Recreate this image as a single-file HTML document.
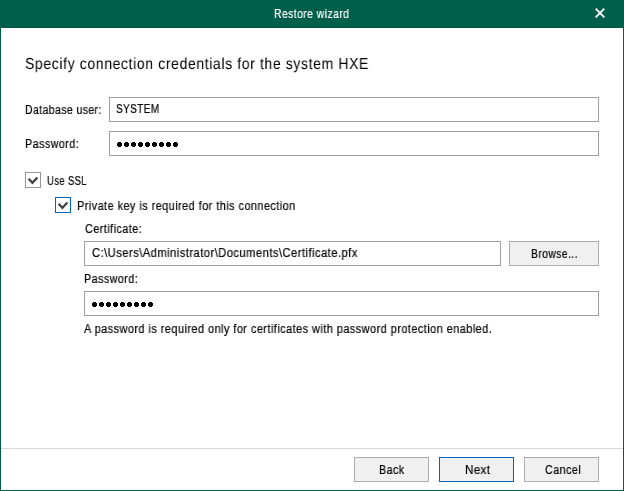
<!DOCTYPE html>
<html><head><meta charset="utf-8">
<style>
html,body{margin:0;padding:0;}
body{width:624px;height:491px;position:relative;overflow:hidden;background:#fff;font-family:"Liberation Sans",sans-serif;font-size:12px;color:#000;}
.a{position:absolute;}
.t{position:absolute;white-space:nowrap;line-height:1;transform-origin:0 0;will-change:transform;-webkit-text-stroke:0.2px currentColor;}
.box{position:absolute;box-sizing:border-box;border:1px solid #a0a0a0;background:#fff;}
.btn{position:absolute;box-sizing:border-box;border:1px solid #adadad;background:#f0f0f0;}
.cb{position:absolute;box-sizing:border-box;width:16px;height:16px;border:1px solid #999;background:#fff;}
</style></head><body>
<div class="a" style="left:0;top:0;width:624px;height:27px;background:#005f4b;"></div>
<div class="a" style="left:0;top:27px;width:624px;height:1px;background:#005545;"></div>
<div class="a" style="left:0;top:0;width:1px;height:491px;background:#005f4b;"></div>
<div class="a" style="left:623px;top:0;width:1px;height:491px;background:#005f4b;"></div>
<div class="a" style="left:0;top:490px;width:624px;height:1px;background:#005f4b;"></div>
<div class="box" style="left:109px;top:97px;width:490px;height:25px;"></div>
<div class="box" style="left:109px;top:131px;width:490px;height:25px;"></div>
<div class="cb" style="left:25px;top:172px;"></div>
<div class="cb" style="left:55px;top:197px;border-color:#0065b8;"></div>
<svg class="a" style="left:25px;top:172px" width="16" height="16" viewBox="0 0 16 16"><path d="M3.6 6.8L7.4 10.8L12.4 5.6" stroke="#404040" stroke-width="2.2" fill="none"/></svg>
<svg class="a" style="left:55px;top:197px" width="16" height="16" viewBox="0 0 16 16"><path d="M3.6 6.8L7.4 10.8L12.4 5.6" stroke="#404040" stroke-width="2.2" fill="none"/></svg>
<div class="box" style="left:84px;top:241px;width:417px;height:25px;"></div>
<div class="btn" style="left:509px;top:241px;width:90px;height:25px;"></div>
<div class="box" style="left:84px;top:291px;width:515px;height:25px;"></div>
<div class="a" style="left:1px;top:448px;width:622px;height:1px;background:#dadada;"></div>
<div class="btn" style="left:354px;top:457px;width:75px;height:25px;"></div>
<div class="btn" style="left:439px;top:457px;width:75px;height:25px;border-color:#0065b8;"></div>
<div class="btn" style="left:524px;top:457px;width:75px;height:25px;"></div>
<svg class="a" style="left:0;top:0" width="624" height="491" viewBox="0 0 624 491">
<path d="M595.7 8.7L604.3 17.3M604.3 8.7L595.7 17.3" stroke="#fff" stroke-width="1.8" fill="none"/>
<path d="M118 142h3v1h1v3h-1v1h-3v-1h-1v-3h1zM125 142h3v1h1v3h-1v1h-3v-1h-1v-3h1zM132 142h3v1h1v3h-1v1h-3v-1h-1v-3h1zM139 142h3v1h1v3h-1v1h-3v-1h-1v-3h1zM146 142h3v1h1v3h-1v1h-3v-1h-1v-3h1zM153 142h3v1h1v3h-1v1h-3v-1h-1v-3h1zM160 142h3v1h1v3h-1v1h-3v-1h-1v-3h1zM167 142h3v1h1v3h-1v1h-3v-1h-1v-3h1zM174 142h3v1h1v3h-1v1h-3v-1h-1v-3h1zM93 302h3v1h1v3h-1v1h-3v-1h-1v-3h1zM100 302h3v1h1v3h-1v1h-3v-1h-1v-3h1zM107 302h3v1h1v3h-1v1h-3v-1h-1v-3h1zM114 302h3v1h1v3h-1v1h-3v-1h-1v-3h1zM121 302h3v1h1v3h-1v1h-3v-1h-1v-3h1zM128 302h3v1h1v3h-1v1h-3v-1h-1v-3h1zM135 302h3v1h1v3h-1v1h-3v-1h-1v-3h1zM142 302h3v1h1v3h-1v1h-3v-1h-1v-3h1zM149 302h3v1h1v3h-1v1h-3v-1h-1v-3h1z" fill="#000"/>
</svg>
<div class="t" id="title" style="left:274.13px;top:8px;font-size:12px;letter-spacing:0.5px;transform:scaleX(0.8669);color:#fff;">Restore wizard</div>
<div class="t" id="head" style="left:25.12px;top:57px;font-size:16px;letter-spacing:0.7px;transform:scaleX(0.876);text-rendering:geometricPrecision;-webkit-text-stroke:0;">Specify connection credentials for the system HXE</div>
<div class="t" id="dbuser" style="left:25.13px;top:104px;font-size:12px;letter-spacing:0.5px;transform:scaleX(0.8684);">Database user:</div>
<div class="t" id="system" style="left:116.17px;top:103px;font-size:12px;letter-spacing:0.5px;transform:scaleX(0.8336);">SYSTEM</div>
<div class="t" id="pw" style="left:25.11px;top:138px;font-size:12px;letter-spacing:0.5px;transform:scaleX(0.8942);">Password:</div>
<div class="t" id="ssl" style="left:47.21px;top:175px;font-size:12px;letter-spacing:0.5px;transform:scaleX(0.7848);">Use SSL</div>
<div class="t" id="pk" style="left:77.09px;top:200px;font-size:12px;letter-spacing:0.5px;transform:scaleX(0.9076);">Private key is required for this connection</div>
<div class="t" id="cert" style="left:85.08px;top:223px;font-size:12px;letter-spacing:0.5px;transform:scaleX(0.9036);">Certificate:</div>
<div class="t" id="path" style="left:92.06px;top:247px;font-size:12px;letter-spacing:0.5px;transform:scaleX(0.9311);">C:\Users\Administrator\Documents\Certificate.pfx</div>
<div class="t" id="browse" style="left:531.14px;top:248px;font-size:12px;letter-spacing:0.5px;transform:scaleX(0.861);">Browse...</div>
<div class="t" id="pw2" style="left:84.11px;top:273px;font-size:12px;letter-spacing:0.5px;transform:scaleX(0.8942);">Password:</div>
<div class="t" id="note" style="left:84.0px;top:323px;font-size:12px;letter-spacing:0.5px;transform:scaleX(0.9101);">A password is required only for certificates with password protection enabled.</div>
<div class="t" id="back" style="left:379.11px;top:464px;font-size:12px;letter-spacing:0.5px;transform:scaleX(0.8891);">Back</div>
<div class="t" id="next" style="left:465.04px;top:464px;font-size:12px;letter-spacing:0.5px;transform:scaleX(0.96);">Next</div>
<div class="t" id="cancel" style="left:545.08px;top:464px;font-size:12px;letter-spacing:0.5px;transform:scaleX(0.8941);">Cancel</div>
</body></html>
